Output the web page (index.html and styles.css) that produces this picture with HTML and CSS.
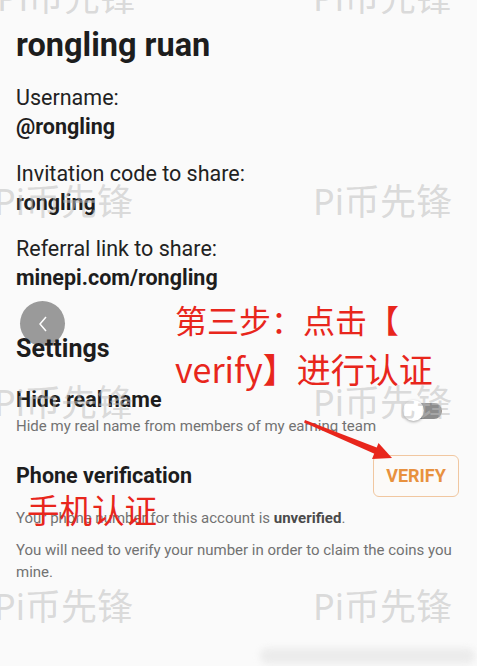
FILE: index.html
```html
<!DOCTYPE html>
<html lang="en">
<head>
<meta charset="utf-8">
<link rel="stylesheet" href="styles.css">
</head>
<body>
<main class="page">
  <h1 class="name">rongling ruan</h1>
  <div class="info">
    <div class="label">Username:</div>
    <div class="value">@rongling</div>
    <div class="label">Invitation code to share:</div>
    <div class="value">rongling</div>
    <div class="label">Referral link to share:</div>
    <div class="value">minepi.com/rongling</div>
  </div>
  <h2 class="section-title">Settings</h2>
  <section class="setting">
    <div class="setting-row">
      <div class="setting-text">
        <div class="setting-name">Hide real name</div>
        <div class="setting-desc">Hide my real name from members of my earning team</div>
      </div>
      <div class="toggle"><span class="knob"></span></div>
    </div>
  </section>
  <section class="setting phone">
    <div class="setting-row">
      <div class="setting-name">Phone verification</div>
      <button class="verify">VERIFY</button>
    </div>
    <p class="setting-desc">Your phone number for this account is <b>unverified</b>.</p>
    <p class="setting-desc">You will need to verify your number in order to claim the coins you mine.</p>
  </section>
</main>

<div class="back"><svg width="14" height="20" viewBox="0 0 14 20"><path d="M10 3 L4 10 L10 17" fill="none" stroke="#fff" stroke-width="1.5"/></svg></div>

<div class="wm wm1">Pi币先锋</div>
<div class="wm wm2">Pi币先锋</div>
<div class="wm wm3">Pi币先锋</div>
<div class="wm wm4">Pi币先锋</div>
<div class="wm wm5">Pi币先锋</div>
<div class="wm wm6">Pi币先锋</div>
<div class="wm wm7">Pi币先锋</div>
<div class="wm wm8">Pi币先锋</div>

<div class="note note-step">
  <div class="note-line1">第三步：点击【</div>
  <div class="note-line2">verify】进行认证</div>
</div>
<div class="note note-phone">手机认证</div>
<svg class="arrow" width="100" height="55" viewBox="0 0 100 55">
  <polygon points="5,10 78,38 75,44 4,12.5" fill="#e8261c"/>
  <polygon points="92,48 72,49 78.5,33" fill="#e8261c"/>
</svg>
<div class="smudge"></div>
</body>
</html>
```
FILE: styles.css
```css
html {
  margin: 0;
  padding: 0;
  background: #fafafa;
}
body {
  margin: 0;
  padding: 0;
  width: 477px;
  height: 666px;
  overflow: hidden;
  position: relative;
  font-family: Roboto, "Noto Sans", sans-serif;
  color: #1f1f1f;
}
.page {
  padding: 25px 16px 0 16px;
}
.name {
  margin: 0;
  font-size: 32.5px;
  font-weight: 700;
  line-height: 40px;
  color: #1d1d1d;
}
.info {
  margin-top: 18px;
}
.label {
  font-size: 21.5px;
  line-height: 29px;
  color: #222;
}
.value {
  font-size: 21.5px;
  font-weight: 700;
  line-height: 29px;
  color: #1d1d1d;
  margin-bottom: 17.5px;
}
.section-title {
  margin: 40.5px 0 0 0;
  font-size: 25px;
  font-weight: 700;
  line-height: 32px;
  color: #1d1d1d;
}
.setting {
  margin-top: 21px;
}
.setting-row {
  display: flex;
  align-items: center;
  justify-content: space-between;
}
.setting-name {
  font-size: 21.5px;
  font-weight: 700;
  line-height: 28px;
  color: #1d1d1d;
}
.setting-desc {
  font-size: 15px;
  line-height: 22px;
  color: #727272;
  margin: 1px 0 0 0;
}
.setting-desc b {
  color: #4a4a4a;
}
.toggle {
  width: 36px;
  height: 16px;
  border-radius: 8px;
  background: #8c8c8c;
  position: relative;
  margin-right: 19px;
}
.knob {
  position: absolute;
  left: -3px;
  top: -3px;
  width: 21px;
  height: 21px;
  border-radius: 50%;
  background: #fff;
  box-shadow: 0 1px 3px rgba(0,0,0,0.35);
}
.phone {
  margin-top: 18px;
}
.phone .setting-row {
  margin-bottom: 10px;
}
.phone .setting-desc {
  margin: 0 0 10px 0;
}
.verify {
  width: 86px;
  height: 42px;
  border: 1.5px solid #f1c7a0;
  border-radius: 6px;
  background: #fcfaf8;
  color: #e8913e;
  font-family: Roboto, sans-serif;
  font-weight: 700;
  font-size: 18px;
  padding: 0;
  margin-right: 2px;
}
.back {
  position: absolute;
  z-index: -1;
  left: 20px;
  top: 301px;
  width: 45px;
  height: 45px;
  border-radius: 50%;
  background: #9a9a9a;
  display: flex;
  align-items: center;
  justify-content: center;
}
.wm {
  position: absolute;
  font-family: "Noto Sans", "Noto Sans CJK SC", sans-serif;
  font-size: 36px;
  line-height: 40px;
  color: rgba(190,190,190,0.55);
  white-space: nowrap;
  pointer-events: none;
}
.wm1 { left: -3px; top: -22px; }
.wm2 { left: 313px; top: -22px; }
.wm3 { left: -6px; top: 182px; }
.wm4 { left: 313px; top: 182px; }
.wm5 { left: -6px; top: 383px; }
.wm6 { left: 313px; top: 383px; }
.wm7 { left: -6px; top: 587px; }
.wm8 { left: 313px; top: 587px; }
.note {
  position: absolute;
  font-family: "Noto Sans CJK SC", sans-serif;
  color: #e8261c;
  white-space: nowrap;
}
.note-step {
  left: 175px;
  top: 299px;
}
.note-line1 {
  font-size: 32px;
  line-height: 40px;
}
.note-line2 {
  font-size: 34px;
  line-height: 60px;
}
.note-phone {
  left: 27px;
  top: 488px;
  font-size: 32.5px;
  line-height: 41px;
}
.arrow {
  position: absolute;
  left: 300px;
  top: 410px;
}
.smudge {
  position: absolute;
  left: 260px;
  top: 648px;
  width: 215px;
  height: 16px;
  border-radius: 8px;
  background: #ececec;
  filter: blur(3px);
}
```
